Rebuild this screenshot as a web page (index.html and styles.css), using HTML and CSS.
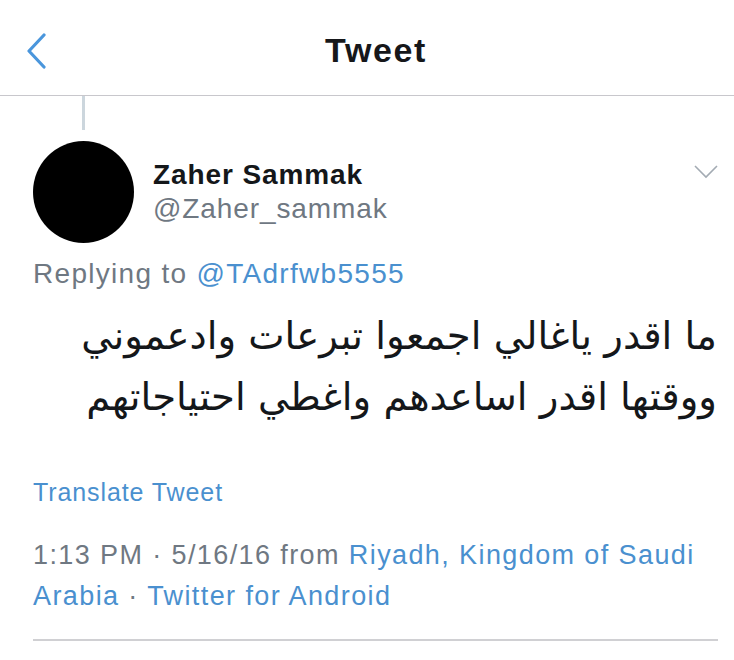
FILE: index.html
```html
<!DOCTYPE html>
<html lang="en">
<head>
<meta charset="utf-8">
<title>Tweet</title>
<link rel="stylesheet" href="styles.css">
</head>
<body>
<header class="topbar">
  <svg class="back" width="24" height="40" viewBox="0 0 24 40"><polyline points="19,2 4,18 19,34" fill="none" stroke="#4a96dc" stroke-width="3.2" stroke-linecap="round" stroke-linejoin="round"/></svg>
  <h1 class="title">Tweet</h1>
</header>
<div class="thread"></div>
<article class="tweet">
  <div class="user">
    <div class="avatar"></div>
    <div class="names">
      <div class="name">Zaher Sammak</div>
      <div class="handle">@Zaher_sammak</div>
    </div>
    <svg class="caret" width="24" height="14" viewBox="0 0 24 14"><polyline points="1,1 12,12 23,1" fill="none" stroke="#a3abb3" stroke-width="1.6"/></svg>
  </div>
  <div class="reply">Replying to <span class="link">@TAdrfwb5555</span></div>
  <p class="body" dir="rtl" lang="ar">ما اقدر ياغالي اجمعوا تبرعات وادعموني<br>ووقتها اقدر اساعدهم واغطي احتياجاتهم</p>
  <div class="translate link">Translate Tweet</div>
  <div class="meta">
    <div class="meta-line">1:13 PM · 5/16/16 from <span class="link">Riyadh, Kingdom of Saudi</span></div>
    <div class="meta-line"><span class="link">Arabia</span> · <span class="link">Twitter for Android</span></div>
  </div>
</article>
</body>
</html>
```
FILE: styles.css
```css
html, body {
  margin: 0;
  padding: 0;
  background: #ffffff;
}
body {
  width: 734px;
  font-family: "Liberation Sans", Arial, sans-serif;
  color: #14171a;
}
.topbar {
  height: 95px;
  border-bottom: 1px solid #c8c7cc;
  display: flex;
  align-items: center;
  position: relative;
}
.back {
  position: absolute;
  left: 25px;
  top: 33px;
}
.title {
  margin: 0 auto;
  font-size: 34px;
  font-weight: bold;
  letter-spacing: 1.6px;
  color: #16171a;
  padding: 6px 0 0 18px;
}
.thread {
  width: 3px;
  height: 34px;
  margin-left: 82px;
  background: #ccd6dd;
}
.tweet {
  padding: 0 16px 0 33px;
}
.user {
  display: flex;
  align-items: flex-start;
  margin-top: 11px;
}
.avatar {
  width: 101px;
  height: 102px;
  border-radius: 50%;
  background: #000;
  flex: none;
}
.names {
  margin-left: 19px;
  flex: 1;
  padding-top: 16px;
}
.name {
  font-size: 28px;
  font-weight: bold;
  letter-spacing: 0.9px;
  line-height: 35px;
  color: #14171a;
}
.handle {
  font-size: 28px;
  letter-spacing: 0.9px;
  line-height: 34px;
  color: #6f7882;
}
.caret {
  margin-top: 24px;
}
.reply {
  margin-top: 14px;
  font-size: 28px;
  letter-spacing: 1.3px;
  line-height: 34px;
  color: #6f7882;
}
.link {
  color: #4a90cf;
}
.body {
  margin: 14px 1px 0 0;
  font-family: "DejaVu Sans", sans-serif;
  font-size: 38.6px;
  line-height: 61px;
  text-align: right;
  color: #14171a;
}
.translate {
  margin-top: 50px;
  font-size: 25px;
  letter-spacing: 0.9px;
  line-height: 30px;
}
.meta {
  margin-top: 28px;
  font-size: 27px;
  letter-spacing: 1.4px;
  line-height: 41px;
  color: #6f7882;
  padding-bottom: 22px;
  border-bottom: 2px solid #d0d0d3;
}
.meta-line {
  white-space: nowrap;
}
```
